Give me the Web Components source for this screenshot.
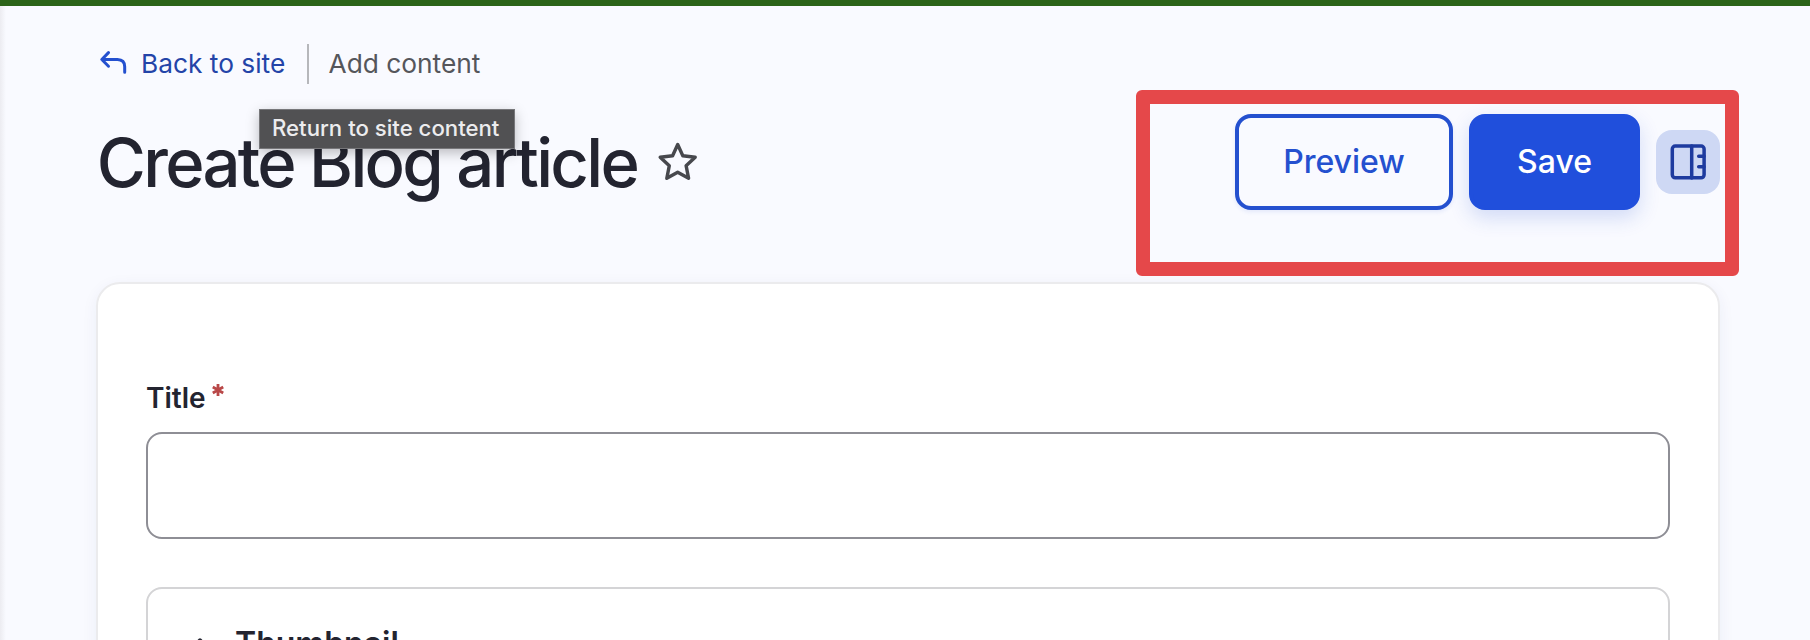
<!DOCTYPE html>
<html lang="en">
<head>
<meta charset="utf-8">
<title>Create Blog article</title>
<style>
html,body{margin:0;height:100%;overflow:hidden}
body{font-family:Inter,"Liberation Sans",sans-serif;background:#f9faff;color:#232430}
</style>
</head>
<body>
<admin-page>
  <page-crumbs slot="crumbs"></page-crumbs>
  <page-heading slot="heading">Create Blog article</page-heading>
  <hover-tip slot="tip">Return to site content</hover-tip>
  <action-bar slot="actions">
    <action-button>Preview</action-button>
    <action-button primary>Save</action-button>
    <panel-toggle></panel-toggle>
  </action-bar>
  <form-card slot="form">
    <text-field>Title</text-field>
    <details-box>Thumbnail</details-box>
  </form-card>
</admin-page>
<script>
const define = (name, html) => customElements.define(name, class extends HTMLElement {
  constructor() {
    super();
    this.attachShadow({ mode: 'open' }).innerHTML = html;
  }
});

define('admin-page', `<style>
:host{display:block;position:relative;box-sizing:border-box;height:640px;overflow:hidden;border-top:6px solid #2c6419}
.edge{position:absolute;left:0;top:0;bottom:0;width:6px;background:linear-gradient(90deg,#ececf1,#f9faff)}
.page{display:flex;flex-direction:column;padding:38px 90px 0 96px}
.head{display:flex;justify-content:space-between;height:168px;margin-top:30px}
</style>
<div class="edge"></div>
<div class="page">
<slot name="crumbs"></slot>
<div class="head"><slot name="heading"></slot><slot name="actions"></slot></div>
<slot name="form"></slot>
</div>
<slot name="tip"></slot>`);

define('page-crumbs', `<style>
:host{display:flex;align-items:center;height:40px;font-size:26.300px;line-height:39px;white-space:nowrap}
svg{display:block;width:34px;height:40px;flex:none}
span{box-sizing:border-box;height:40px}
.back{color:#2344a8;margin-left:11px;width:166px}
.here{color:#55565b;border-left:2px solid #b6b7bb;padding-left:19.500px}
</style>
<svg viewBox="96 44 34 40" fill="none" stroke="#2450cf" stroke-width="3" stroke-linecap="round" stroke-linejoin="round"><path d="M108.500 52.600L101.800 59.500L108.500 66.200M102 59.500H117.500Q124.700 59.700 124.700 66.700V72.200"/></svg>
<span class="back">Back to site</span><span class="here">Add content</span>`);

define('page-heading', `<style>
:host{display:flex;align-items:center;height:96px;margin-left:.8px;font-size:67px;font-weight:500;letter-spacing:-2.700px;white-space:nowrap}
svg{display:block;width:42px;height:42px;margin:0 0 2px 20px}
</style>
<span class="t"><slot></slot></span>
<svg viewBox="657 140 42 42" fill="none" stroke="#47484d" stroke-width="3.400" stroke-linejoin="round"><path d="M677.700 144.500L682.800 155.700L695.200 157.200L686.100 165.700L688.600 178.300L677.700 172.200L666.800 178.300L669.300 165.700L660.200 157.200L672.600 155.700Z"/></svg>`);

define('hover-tip', `<style>
:host{position:absolute;left:259px;top:103px;width:256px;height:40px;box-sizing:border-box;border:1px solid #77777a;background:#515153;color:#ececee;font-size:22.200px;font-weight:500;line-height:36px;padding-left:12px;white-space:nowrap;box-shadow:0 4px 12px rgba(0,0,0,.25)}
</style><slot></slot>`);

define('action-bar', `<style>
:host{display:flex;position:relative;gap:16px;align-items:flex-start}
.mark{position:absolute;left:-99px;top:-24px;width:603px;height:186px;box-sizing:border-box;border:14px solid #e5484a;border-radius:6px}
</style><slot></slot><div class="mark"></div>`);

define('action-button', `<style>
:host{display:flex;align-items:center;justify-content:center;box-sizing:border-box;width:218px;height:96px;padding-bottom:2px;border:4px solid #2450cf;border-radius:16px;color:#2450cf;font-size:32px;font-weight:500;box-shadow:0 2px 4px rgba(36,80,207,.1)}
:host([primary]){width:171px;background:#204fdc;border-color:#204fdc;color:#fff;box-shadow:0 8px 20px rgba(36,80,207,.18)}
</style><slot></slot>`);

define('panel-toggle', `<style>
:host{display:flex;width:64px;height:64px;margin-top:16px;border-radius:16px;background:#ced8f4}
svg{display:block}
</style>
<svg width="64" height="64" viewBox="1656 130 64 64" fill="none" stroke="#1e3b9f" stroke-width="3.500" stroke-linecap="round"><rect x="1672.300" y="146" width="31.800" height="31.800" rx="3"/><path d="M1691.700 146V178M1704 156.200H1698.700M1704 166.800H1698.700"/></svg>`);

define('form-card', `<style>
:host{display:block;box-sizing:border-box;height:500px;border:2px solid #ebebed;border-radius:24px;background:#fff;padding:92px 48px 0;box-shadow:0 4px 16px rgba(35,50,120,.06)}
</style><slot></slot>`);

define('text-field', `<style>
:host{display:block}
label{display:flex;height:48px;line-height:44px;font-size:28px;font-weight:600}
svg{display:block;margin:7px 0 0 5px}
.box{height:107px;margin-top:8px;box-sizing:border-box;border:2px solid #8e8e95;border-radius:16px}
</style>
<label><slot></slot><svg width="14" height="14" viewBox="0 0 14 14" stroke="#b94848" stroke-width="2.800"><path d="M7 1V13M1.800 4L12.200 10M12.200 4L1.800 10"/></svg></label>
<div class="box"></div>`);

define('details-box', `<style>
:host{display:flex;box-sizing:border-box;height:200px;margin-top:48px;border:2px solid #d4d4d6;border-radius:16px;padding:35px 0 0 41px;font-size:32px;font-weight:600;line-height:40px}
svg{display:block;margin:13px 24px 0 0}
</style>
<svg width="22" height="22" viewBox="0 0 22 22" fill="none" stroke="#232430" stroke-width="3.500" stroke-linecap="round" stroke-linejoin="round"><path d="M3 11L11 3L19 11"/></svg><slot></slot>`);
</script>
</body>
</html>
